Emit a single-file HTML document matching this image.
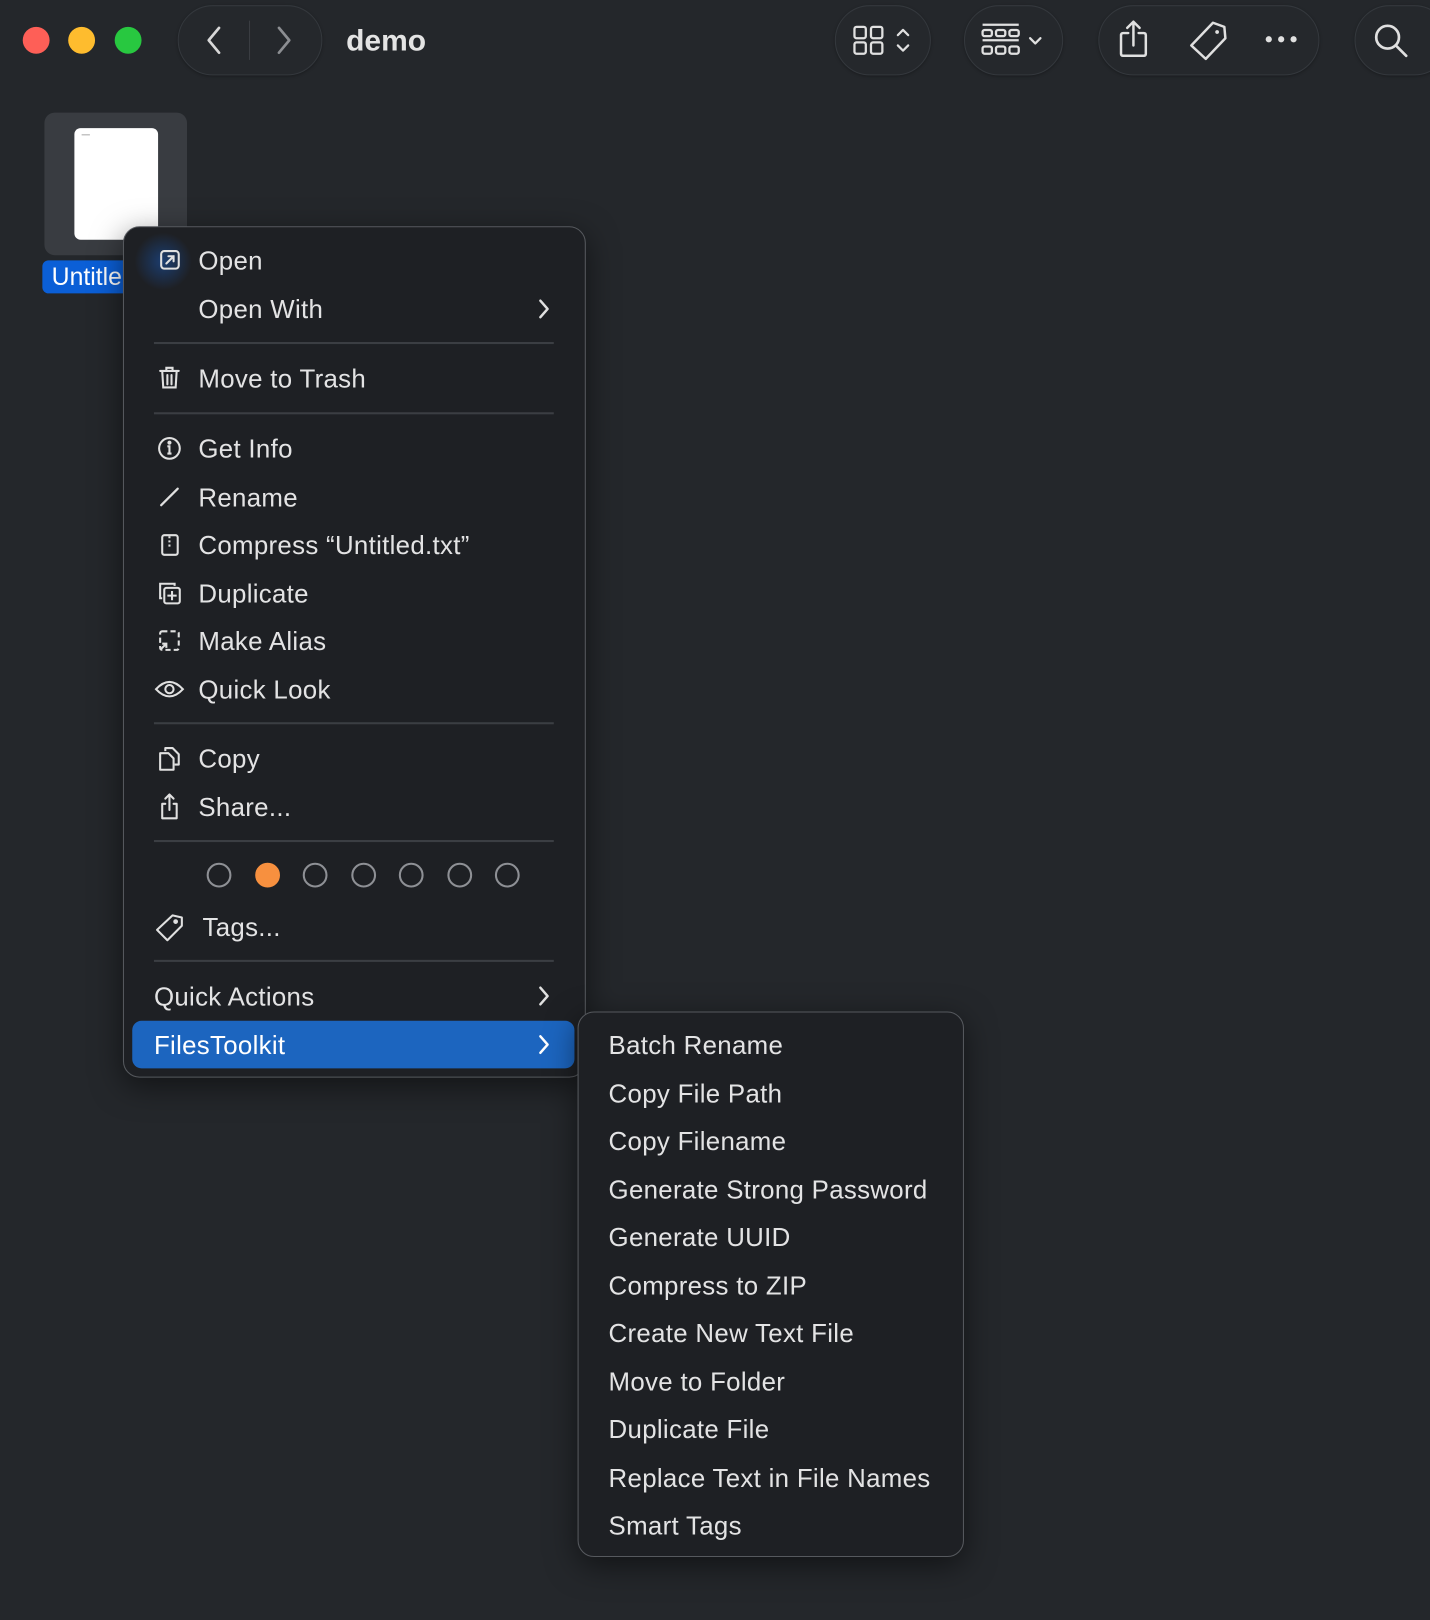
<!DOCTYPE html>
<html><head><meta charset="utf-8"><style>
html,body{margin:0;padding:0;background:#24272b;width:1430px;height:1620px;overflow:hidden}
#w{position:absolute;left:0;top:0;width:1384px;height:1568px;transform:scale(1.0332);transform-origin:0 0;font-family:"Liberation Sans",sans-serif;color:#e2e2e3}
.a{position:absolute}
.pill{position:absolute;border:1px solid #34383d;border-radius:34px;background:#25282c;box-shadow:0 1px 3px rgba(0,0,0,.3)}
.t{position:absolute;font-size:25px;letter-spacing:0.3px;line-height:30px;white-space:nowrap;color:#e3e3e4;margin-top:1px}
.sep{position:absolute;left:149px;width:387px;height:2px;background:#3b3e43}
.ic{position:absolute;left:152px}
.c{position:absolute;width:24px;height:24px;border:2px solid #8e9095;border-radius:50%;top:835px;box-sizing:border-box}
svg{overflow:visible}
</style></head><body><div id="w">
<div class="a" style="left:22px;top:26px;width:26px;height:26px;border-radius:50%;background:#fe5f57"></div>
<div class="a" style="left:66px;top:26px;width:26px;height:26px;border-radius:50%;background:#febc2e"></div>
<div class="a" style="left:111px;top:26px;width:26px;height:26px;border-radius:50%;background:#28c840"></div>
<div class="pill" style="left:172px;top:5px;width:138px;height:66px"></div>
<div class="a" style="left:241px;top:20px;width:1px;height:38px;background:#3a3d42"></div>
<svg class="a" style="left:196px;top:24px" width="22" height="32"><path d="M16 3 L6 15 L16 27" stroke="#d8d8d8" stroke-width="2.6" fill="none" stroke-linecap="round" stroke-linejoin="round"/></svg>
<svg class="a" style="left:264px;top:24px" width="22" height="32"><path d="M6 3 L16 15 L6 27" stroke="#8c8e92" stroke-width="2.6" fill="none" stroke-linecap="round" stroke-linejoin="round"/></svg>
<div class="a" style="left:335px;top:24px;font-size:29px;font-weight:bold;color:#e4e4e4">demo</div>
<div class="pill" style="left:808px;top:5px;width:91px;height:66px"></div>
<svg class="a" style="left:826px;top:24px" width="60" height="32"><g stroke="#e0e0e0" stroke-width="2.2" fill="none"><rect x="1" y="2" width="11" height="11" rx="2"/><rect x="17" y="2" width="11" height="11" rx="2"/><rect x="1" y="17" width="11" height="11" rx="2"/><rect x="17" y="17" width="11" height="11" rx="2"/><path d="M43 10 L48 5 L53 10 M43 20 L48 25 L53 20" stroke-linecap="round" stroke-linejoin="round"/></g></svg>
<div class="pill" style="left:933px;top:5px;width:94px;height:66px"></div>
<svg class="a" style="left:950px;top:22px" width="64" height="36"><g stroke="#e0e0e0" stroke-width="2.2" fill="none"><path d="M1 2 H36 M1 17 H36"/><rect x="1" y="7" width="9" height="6" rx="2"/><rect x="14" y="7" width="9" height="6" rx="2"/><rect x="27" y="7" width="9" height="6" rx="2"/><rect x="1" y="23" width="9" height="7" rx="2"/><rect x="14" y="23" width="9" height="7" rx="2"/><rect x="27" y="23" width="9" height="7" rx="2"/><path d="M47 15 L52 20 L57 15" stroke-linecap="round" stroke-linejoin="round"/></g></svg>
<div class="pill" style="left:1063px;top:5px;width:212px;height:66px"></div>
<svg class="a" style="left:1082px;top:18px" width="34" height="40"><g stroke="#e0e0e0" stroke-width="2.4" fill="none" stroke-linecap="round" stroke-linejoin="round"><path d="M10 14 H5 Q3 14 3 16 V34 Q3 36 5 36 H25 Q27 36 27 34 V16 Q27 14 25 14 H20"/><path d="M15 26 V3 M9 9 L15 3 L21 9"/></g></svg>
<svg class="a" style="left:1150px;top:20px" width="40" height="40"><g stroke="#e0e0e0" stroke-width="2.4" fill="none" stroke-linejoin="round"><path d="M24 2 L35 6 L36 17 L17 37 L3 24 Z"/><circle cx="28" cy="11" r="1.8" fill="#e0e0e0" stroke="none"/></g></svg>
<svg class="a" style="left:1224px;top:32px" width="34" height="12"><g fill="#e0e0e0"><circle cx="4" cy="6" r="3"/><circle cx="16" cy="6" r="3"/><circle cx="28" cy="6" r="3"/></g></svg>
<div class="pill" style="left:1311px;top:5px;width:90px;height:66px"></div>
<svg class="a" style="left:1329px;top:22px" width="36" height="36"><g stroke="#e0e0e0" stroke-width="2.6" fill="none" stroke-linecap="round"><circle cx="14" cy="14" r="11"/><path d="M22 22 L32 32"/></g></svg>
<div class="a" style="left:43px;top:109px;width:138px;height:138px;border-radius:10px;background:#393c41"></div>
<div class="a" style="left:72px;top:124px;width:81px;height:108px;border-radius:6px;background:#fff"></div>
<div class="a" style="left:79px;top:130px;width:8px;height:1px;background:#aaa"></div>
<div class="a" style="left:41px;top:252px;width:100px;height:32px;border-radius:6px;background:#0b5fd7"></div>
<div class="a" style="left:50px;top:254px;font-size:24px;line-height:30px;color:#fff">Untitled</div>
<div class="a" style="left:119px;top:219px;width:446px;height:822px;border-radius:16px;background:#1e2024;border:1px solid #56595e;box-shadow:0 8px 30px rgba(0,0,0,.5)"></div>
<div class="a" style="left:130px;top:225px;width:56px;height:56px;border-radius:50%;background:radial-gradient(circle,#1b3d70 0%,rgba(27,61,112,0) 70%)"></div>
<div class="t" style="left:192px;top:237px">Open</div>
<div class="t" style="left:192px;top:284px">Open With</div>
<div class="sep" style="top:331px"></div>
<div class="t" style="left:192px;top:351px">Move to Trash</div>
<div class="sep" style="top:399px"></div>
<div class="t" style="left:192px;top:419px">Get Info</div>
<div class="t" style="left:192px;top:466px">Rename</div>
<div class="t" style="left:192px;top:512px">Compress “Untitled.txt”</div>
<div class="t" style="left:192px;top:559px">Duplicate</div>
<div class="t" style="left:192px;top:605px">Make Alias</div>
<div class="t" style="left:192px;top:652px">Quick Look</div>
<div class="sep" style="top:699px"></div>
<div class="t" style="left:192px;top:719px">Copy</div>
<div class="t" style="left:192px;top:766px">Share...</div>
<div class="sep" style="top:813px"></div>
<div class="c" style="left:200px"></div>
<div class="c" style="left:247px;background:#f7903f;border-color:#f7903f"></div>
<div class="c" style="left:293px"></div>
<div class="c" style="left:340px"></div>
<div class="c" style="left:386px"></div>
<div class="c" style="left:433px"></div>
<div class="c" style="left:479px"></div>
<div class="t" style="left:196px;top:882px">Tags...</div>
<div class="sep" style="top:929px"></div>
<div class="t" style="left:149px;top:949px">Quick Actions</div>
<div class="a" style="left:128px;top:988px;width:428px;height:46px;border-radius:9px;background:#1c65bf"></div>
<div class="t" style="left:149px;top:996px;color:#fff">FilesToolkit</div>
<svg class="a" style="left:520px;top:289px" width="14" height="20"><path d="M3 2 L10 10 L3 18" stroke="#e0e0e0" stroke-width="2.4" fill="none" stroke-linecap="round" stroke-linejoin="round"/></svg>
<svg class="a" style="left:520px;top:954px" width="14" height="20"><path d="M3 2 L10 10 L3 18" stroke="#e0e0e0" stroke-width="2.4" fill="none" stroke-linecap="round" stroke-linejoin="round"/></svg>
<svg class="a" style="left:520px;top:1001px" width="14" height="20"><path d="M3 2 L10 10 L3 18" stroke="#fff" stroke-width="2.4" fill="none" stroke-linecap="round" stroke-linejoin="round"/></svg>
<svg class="ic" style="top:240px" width="26" height="26"><g stroke="#e0e0e0" stroke-width="2" fill="none" stroke-linecap="round"><rect x="4" y="3" width="17" height="17" rx="3"/><path d="M9 15 L16 8 M11 8 H16 V13"/></g></svg>
<svg class="ic" style="top:354px" width="26" height="26"><g stroke="#e0e0e0" stroke-width="2" fill="none" stroke-linecap="round"><path d="M3 5 H21 M9 5 V2 H15 V5 M5 5 L6 21 H18 L19 5 M10 9 V18 M14 9 V18"/></g></svg>
<svg class="ic" style="top:422px" width="26" height="26"><g stroke="#e0e0e0" stroke-width="2" fill="none"><circle cx="12" cy="12" r="10"/><path d="M10 10 H12 V17 M10 17 H14"/><circle cx="12" cy="6.5" r="1" fill="#e0e0e0"/></g></svg>
<svg class="ic" style="top:469px" width="26" height="26"><path d="M4 20 L20 4" stroke="#e0e0e0" stroke-width="2.2" stroke-linecap="round"/></svg>
<svg class="ic" style="top:515px" width="26" height="26"><g stroke="#e0e0e0" stroke-width="2" fill="none"><rect x="5" y="3" width="15" height="19" rx="2"/><path d="M12 4 V16" stroke-dasharray="2 2"/></g></svg>
<svg class="ic" style="top:562px" width="26" height="26"><g stroke="#e0e0e0" stroke-width="2" fill="none"><path d="M5 17 H3 V3 H17 V5"/><rect x="7" y="7" width="15" height="15" rx="2"/><path d="M14.5 10 V19 M10 14.5 H19"/></g></svg>
<svg class="ic" style="top:608px" width="26" height="26"><g stroke="#e0e0e0" stroke-width="2" fill="none"><rect x="3" y="3" width="18" height="18" rx="2" stroke-dasharray="5 3"/><path d="M3 21 L9 15 M5 15 H9 V19"/></g></svg>
<svg class="ic" style="top:655px;left:150px" width="30" height="26"><g stroke="#e0e0e0" stroke-width="2" fill="none"><path d="M1 12 Q14 -2 27 12 Q14 26 1 12 Z"/><circle cx="14" cy="12" r="4"/></g></svg>
<svg class="ic" style="top:722px" width="26" height="26"><g stroke="#e0e0e0" stroke-width="2" fill="none" stroke-linejoin="round"><path d="M8 5 V2 H15 L21 8 V18 H17"/><path d="M3 7 H11 L16 12 V23 H3 Z"/></g></svg>
<svg class="ic" style="top:767px" width="26" height="28"><g stroke="#e0e0e0" stroke-width="2" fill="none" stroke-linecap="round" stroke-linejoin="round"><path d="M8 11 H5 V25 H19 V11 H16 M12 17 V2 M8 6 L12 2 L16 6"/></g></svg>
<svg class="ic" style="top:884px;left:150px" width="30" height="28"><g stroke="#e0e0e0" stroke-width="2" fill="none" stroke-linejoin="round"><path d="M17 2 L26 4 L26 12 L12 26 L2 16 Z"/><circle cx="20" cy="8" r="1.3" fill="#e0e0e0"/></g></svg>
<div class="a" style="left:559px;top:979px;width:372px;height:526px;border-radius:16px;background:#1e2024;border:1px solid #56595e;box-shadow:0 8px 30px rgba(0,0,0,.5)"></div>
<div class="t" style="left:589px;top:996px">Batch Rename</div>
<div class="t" style="left:589px;top:1043px">Copy File Path</div>
<div class="t" style="left:589px;top:1089px">Copy Filename</div>
<div class="t" style="left:589px;top:1136px">Generate Strong Password</div>
<div class="t" style="left:589px;top:1182px">Generate UUID</div>
<div class="t" style="left:589px;top:1229px">Compress to ZIP</div>
<div class="t" style="left:589px;top:1275px">Create New Text File</div>
<div class="t" style="left:589px;top:1322px">Move to Folder</div>
<div class="t" style="left:589px;top:1368px">Duplicate File</div>
<div class="t" style="left:589px;top:1415px">Replace Text in File Names</div>
<div class="t" style="left:589px;top:1461px">Smart Tags</div>
</div></body></html>
